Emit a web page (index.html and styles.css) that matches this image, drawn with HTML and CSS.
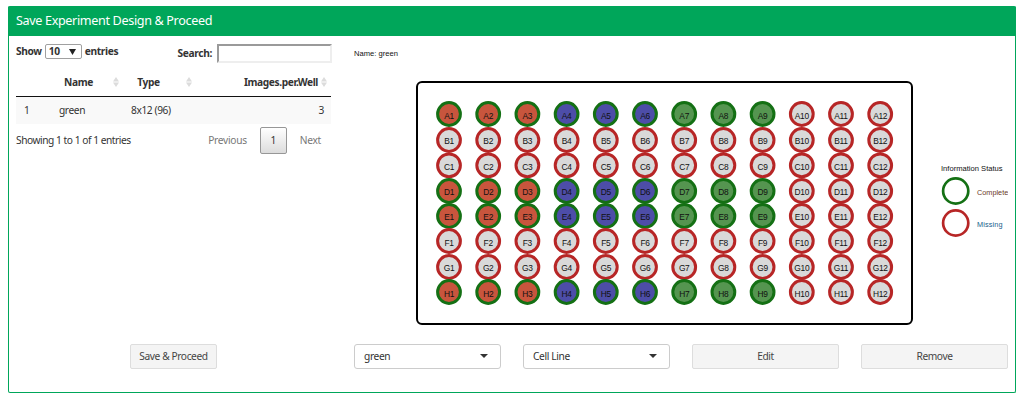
FILE: index.html
```html
<!DOCTYPE html>
<html lang="en">
<head>
<meta charset="utf-8">
<title>Save Experiment Design</title>
<link rel="stylesheet" href="styles.css">
</head>
<body>
<section class="box">
  <header class="box-header"><span>Save Experiment Design &amp; Proceed</span></header>
  <div class="box-body">
    <div class="left">
      <div class="tools">
        <label class="length">Show <span class="length-select">10<svg width="7" height="6" viewBox="0 0 7 6"><path d="M0 0h7L3.5 6z" fill="#222"/></svg></span> entries</label>
        <label class="search"><span>Search:</span><input type="text" class="search-input"></label>
      </div>
      <table class="designs">
        <colgroup><col class="c1"><col class="c2"><col class="c3"><col class="c4"></colgroup>
        <thead><tr>
          <th></th>
          <th><div class="th-in">Name<svg class="sort" width="6" height="10" viewBox="0 0 6 10"><path d="M0 4.5L3 0l3 4.5zM0 5.5h6L3 10z"/></svg></div></th>
          <th><div class="th-in">Type<svg class="sort" width="6" height="10" viewBox="0 0 6 10"><path d="M0 4.5L3 0l3 4.5zM0 5.5h6L3 10z"/></svg></div></th>
          <th><div class="th-in">Images.per.Well<svg class="sort" width="6" height="10" viewBox="0 0 6 10"><path d="M0 4.5L3 0l3 4.5zM0 5.5h6L3 10z"/></svg></div></th>
        </tr></thead>
        <tbody><tr><td>1</td><td>green</td><td>8x12 (96)</td><td>3</td></tr></tbody>
      </table>
      <div class="foot">
        <span class="info">Showing 1 to 1 of 1 entries</span>
        <nav class="pages"><span>Previous</span><span class="current">1</span><span>Next</span></nav>
      </div>
      <button class="btn save">Save &amp; Proceed</button>
    </div>
    <div class="right">
      <svg class="plot" id="plot" width="654" height="300" viewBox="354 37 654 300">
        <text x="354" y="56" class="caption">Name: green</text>
        <rect x="417" y="82" width="495" height="242" rx="5" class="plate"/>
        <g id="wells"></g>
        <text x="941" y="171" class="caption">Information Status</text>
        <circle cx="955.7" cy="191" r="12.6" class="ring complete"/>
        <text x="977" y="195" class="key key-complete">Complete</text>
        <circle cx="955.7" cy="223" r="12.6" class="ring missing"/>
        <text x="977" y="227" class="key key-missing">Missing</text>
      </svg>
      <div class="controls">
        <div class="select">green<i class="caret"></i></div>
        <div class="select">Cell Line<i class="caret"></i></div>
        <button class="btn">Edit</button>
        <button class="btn">Remove</button>
      </div>
    </div>
  </div>
</section>
<script src="plate.js"></script>
</body>
</html>
```
FILE: styles.css
```css
* { box-sizing: border-box; }
body { margin: 0; padding: 6px 10px 0 8px; background: #fff; color: #333; font: 10.2px/15px "Noto Sans", "Open Sans", sans-serif; }
.box { height: 387px; border: 1px solid #00a65a; border-top: 0; border-radius: 2px; background: #fff; }
.box-header { height: 30px; margin: 0 -1px; padding: 0 0 2px 8px; display: flex; align-items: center; background: #00a65a; color: #fff; font-size: 12.6px; letter-spacing: -.35px; border-radius: 2px 2px 0 0; }
.box-body { display: flex; padding: 1px 7px 0; gap: 23px; }
.left { width: 315px; height: 332px; display: flex; flex-direction: column; }
.tools { display: flex; justify-content: space-between; font-weight: 700; padding-top: 7px; height: 31px; }
.length { display: flex; align-items: center; gap: 3px; height: 15px; letter-spacing: -.35px; }
.length-select { width: 37px; height: 15px; border: 1px solid #a0a0a0; border-radius: 2px; display: flex; align-items: center; justify-content: space-between; padding: 0 5px 0 3px; letter-spacing: -.3px; }
.search { display: flex; gap: 5px; height: 19px; align-items: center; letter-spacing: -.35px; margin-right: -1px; }
.search-input { width: 115px; height: 19px; border: 2px solid; border-color: #9a9a9a #eee #eee #9a9a9a; background: #fff; padding: 0; }
.designs { width: 315px; table-layout: fixed; border-collapse: separate; border-spacing: 0; }
.c1 { width: 33px; } .c2 { width: 72px; } .c3 { width: 73px; }
.designs th { height: 29px; padding: 0; border-bottom: 1px solid #111; letter-spacing: -.4px; }
.th-in { display: flex; align-items: center; justify-content: center; position: relative; height: 28px; padding-right: 13px; }
.designs th:last-child .th-in { justify-content: flex-end; }
.designs th:nth-child(3) .th-in { padding-right: 18px; }
.sort { position: absolute; right: 4px; top: 9px; fill: #dcdcdc; }
.designs th:nth-child(2) .sort { right: 2px; }
.designs th:nth-child(3) .sort { right: 2px; }
.designs td { height: 27px; padding: 0 10px; background: #f9f9f9; letter-spacing: -.4px; }
.designs td:first-child { padding: 0 8px; }
.designs td:last-child { text-align: right; padding-right: 7px; }
.foot { display: flex; justify-content: space-between; padding-top: 3px; }
.info { padding-top: 6px; letter-spacing: -.46px; }
.pages { display: flex; align-items: center; gap: 13px; color: #777; padding-right: 10px; letter-spacing: -.28px; }
.current { width: 27px; height: 27px; border: 1px solid #979797; border-radius: 2px; background: linear-gradient(#fff, #dcdcdc); color: #333; display: flex; align-items: center; justify-content: center; }
.btn { height: 25px; font: inherit; letter-spacing: -.4px; color: #444; background: #f4f4f4; border: 1px solid #ddd; border-radius: 2px; padding: 0; }
.save { width: 87px; margin: auto auto 0 114px; }
.right { width: 654px; }
.plot { display: block; margin-bottom: 7px; }
.controls { display: grid; grid-template-columns: repeat(4, 147px); gap: 22px; }
.select { height: 25px; border: 1px solid #ccc; border-radius: 3px; padding: 0 12px 0 9px; display: flex; align-items: center; justify-content: space-between; letter-spacing: -.35px; }
.caret { border: 4px solid transparent; border-top-color: #333; border-bottom: 0; margin-top: -2px; }
text { font-family: "Liberation Sans", Arial, sans-serif; font-size: 7.6px; fill: #111; }
.label { text-anchor: middle; font-size: 8.4px; letter-spacing: -.3px; }
.key { font-size: 7.3px; }
.key-complete { fill: #6b3a2a; }
.key-missing { fill: #17608c; letter-spacing: .15px; }
.plate { fill: #fff; stroke: #000; stroke-width: 2; }
.ring { fill: none; stroke-width: 2.7; }
.complete { stroke: #147014; }
.missing { stroke: #b72626; }
.red { fill: #c8553d; }
.blue { fill: #4d4da8; }
.green { fill: #559550; }
.empty { fill: #d9d9d9; }
```
FILE: plate.js
```js
const NS = "http://www.w3.org/2000/svg";
const wells = document.getElementById("wells");
const rows = "ABCDEFGH";
const rowY = [114, 140, 165.3, 191, 216, 241, 267, 292];
const filledRows = "ADEH";
const fills = ["red", "blue", "green"];

function add(tag, attrs, text) {
  const el = document.createElementNS(NS, tag);
  for (const key in attrs) el.setAttribute(key, attrs[key]);
  if (text) el.textContent = text;
  wells.appendChild(el);
}

[...rows].forEach((row, r) => {
  for (let c = 0; c < 12; c++) {
    const complete = filledRows.includes(row) && c < 9;
    const x = 449 + c * 39.2;
    const state = complete ? fills[Math.floor(c / 3)] + " complete" : "empty missing";
    add("circle", { cx: x, cy: rowY[r], r: 11.4, "stroke-width": 3, class: state });
    add("text", { x: x, y: Math.round(118.7 + r * 25.4), class: "label" }, row + (c + 1));
  }
});
```
